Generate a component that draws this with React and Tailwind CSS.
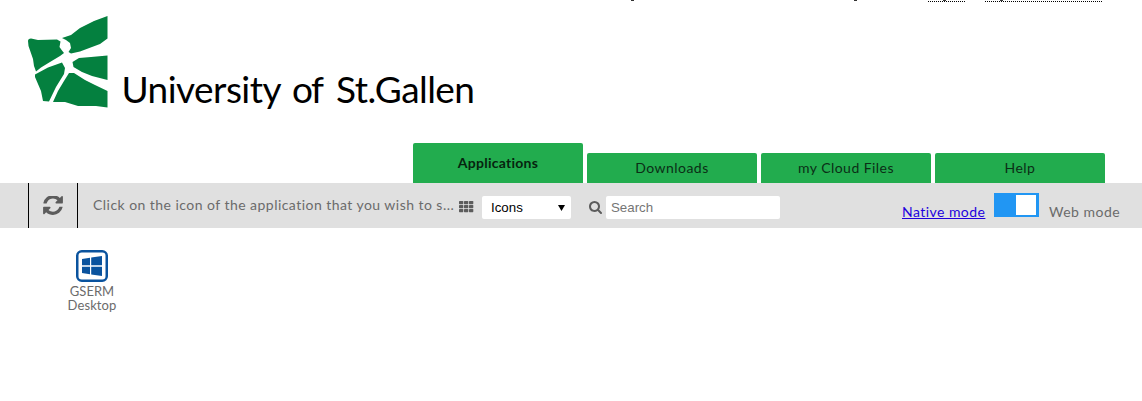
import React from "react";

const tabs = ["Downloads", "my Cloud Files", "Help"];

function Logo() {
  return (
    <svg className="block" width="480" height="120" viewBox="0 0 480 120" role="img">
      <g fill="#04803f">
        <path d="M28 41 Q28 38.500 31 38.500 L38 40 L57 39.500 L60.500 41.500 L59.500 47 L62 50.500 L64 53 L60 56 L50 62 L41 67.500 L36 71.500 L34 66 L33 59 L28.500 46 Z" />
        <path d="M62 38 L71 35 L80 28 L94 21 L107.500 16 L107.500 38.500 L100 44 L92 47 L80 51.500 L71 53.500 L68.500 52 L71 48 L70 43 L66 40 Z" />
        <path d="M72.500 62 L79 58 L91 57 L107.500 55.500 L107.500 80 L92 76 L82 72 L73.500 67 Z" />
        <path d="M35 74.500 L48 67.500 L62 62.500 L65 68 L64 74 L56 87 L49 101.500 L43 101 L41 91 L35 77 Z" />
        <path d="M69 73 L74 73 L85 80 L95 85 L107.500 91 L107.500 107.500 L96 106 L78 106 L65 102 L53 102 L58 91 L64 81 Z" />
      </g>
      <g fontSize="37" fontFamily="Lato, sans-serif" fill="#000">
        <text x="121.500" y="103" textLength="160">University</text>
        <text x="292" y="103" textLength="32">of</text>
        <text x="336" y="103" textLength="139">St.Gallen</text>
      </g>
    </svg>
  );
}

function RefreshIcon() {
  return (
    <svg width="20" height="19" viewBox="0 64 1536 1472" fill="#5c5c5c">
      <path d="M1511 928q0 5-1 7-64 268-268 434.500t-478 166.500q-146 0-282.500-55t-243.500-157l-129 129q-19 19-45 19t-45-19-19-45v-448q0-26 19-45t45-19h448q26 0 45 19t19 45-19 45l-137 137q71 66 161 102t187 36q134 0 250-65t186-179q11-17 53-117 8-23 30-23h192q13 0 22.500 9.500t9.500 22.500zm25-800v448q0 26-19 45t-45 19h-448q-26 0-45-19t-19-45 19-45l138-138q-148-137-349-137-134 0-250 65t-186 179q-11 17-53 117-8 23-30 23h-199q-13 0-22.500-9.500t-9.500-22.500v-7q65-268 270-434.500t480-166.500q146 0 284 55.500t245 156.500l130-129q19-19 45-19t45 19 19 45z" />
    </svg>
  );
}

function GridIcon() {
  return (
    <svg width="15" height="12" viewBox="0 0 15 12" fill="#5c5c5c">
      {[0, 4, 8].map((y) =>
        [0, 5, 10].map((x) => <rect key={`${x}-${y}`} x={x} y={y} width="4.300" height="3.200" rx="0.600" />)
      )}
    </svg>
  );
}

function SearchIcon() {
  return (
    <svg width="13" height="13" viewBox="0 128 1664 1664" fill="#5c5c5c">
      <path d="M1152 832q0-185-131.500-316.500t-316.500-131.500-316.500 131.500-131.500 316.500 131.500 316.500 316.500 131.500 316.500-131.500 131.500-316.500zm512 832q0 52-38 90t-90 38q-54 0-90-38l-343-342q-179 124-399 124-143 0-273.500-55.500t-225-150-150-225-55.500-273.500 55.500-273.500 150-225 225-150 273.500-55.500 273.500 55.500 225 150 150 225 55.500 273.500q0 220-124 399l343 343q37 37 37 90z" />
    </svg>
  );
}

function DesktopIcon() {
  return (
    <svg width="32" height="32" viewBox="0 0 32 32">
      <rect x="1.250" y="1.250" width="29.500" height="29.500" rx="4.500" fill="#fff" stroke="#0a539e" strokeWidth="2.500" />
      <path fill="#0a539e" d="M6 9 L14 7.800 V15.300 H6 Z M15.200 7.600 L26 6 V15.300 H15.200 Z M6 16.700 H14 V24.200 L6 23 Z M15.200 16.700 H26 V26 L15.200 24.400 Z" />
    </svg>
  );
}

function TopRemnants() {
  return (
    <svg className="absolute left-0 top-0" width="1142" height="3" viewBox="0 0 1142 3">
      <path d="M631 .5h3M854 .5h3M943 .5h3M1000 .5h3" stroke="#333" />
      <path d="M928 1.500h37M985 1.500h117" stroke="#000" strokeDasharray="1 1" />
    </svg>
  );
}

export default function App() {
  return (
    <div className="relative h-[401px] w-[1142px] overflow-hidden bg-white font-['Lato',sans-serif] text-[14px] text-[#6b6b6b]">
      <TopRemnants />
      <header className="h-[143px]">
        <Logo />
      </header>
      <nav className="flex h-10 items-end gap-1 pl-[413px] text-[#0b2e16]">
        <div className="flex h-10 w-[170px] items-center justify-center rounded-t-[2px] bg-[#22ac4e] pb-px font-bold tracking-[0.250px] text-[#06240f]">
          Applications
        </div>
        {tabs.map((label) => (
          <div key={label} className="flex h-[30px] w-[170px] items-center justify-center rounded-t-[2px] bg-[#22ac4e] pb-px tracking-[0.450px]">
            {label}
          </div>
        ))}
      </nav>
      <div className="flex h-[45px] items-start bg-[#e0e0e0]">
        <button className="ml-7 flex h-[45px] w-[50px] items-center justify-center border-x border-black">
          <RefreshIcon />
        </button>
        <p className="ml-[15px] mt-3 w-[362px] whitespace-nowrap leading-5 tracking-[0.460px]">
          Click on the icon of the application that you wish to s...
        </p>
        <div className="ml-1 mt-[18px]"><GridIcon /></div>
        <div className="ml-2 mt-[13px] flex h-[23px] w-[89px] items-center justify-between rounded-[2px] bg-white pl-[9px] pr-[6px] font-['Liberation_Sans',sans-serif] text-[13.300px] text-black">
          <span>Icons</span>
          <svg width="7" height="6" viewBox="0 0 7 6"><path d="M0 0h7L3.500 6z" /></svg>
        </div>
        <div className="ml-[18px] mt-[18px]"><SearchIcon /></div>
        <input
          className="ml-1 mt-[13px] h-[23px] w-[174px] rounded-[2px] bg-white px-[5px] font-['Liberation_Sans',sans-serif] text-[13.300px] placeholder:text-[#757575]"
          placeholder="Search"
        />
        <a className="ml-[122px] mt-[19px] w-[84px] whitespace-nowrap leading-5 tracking-[0.450px] text-[#2200dd] underline">Native mode</a>
        <div className="ml-2 mt-[10px] flex h-6 w-[45px] justify-end bg-[#2196f3] px-[3px] py-[2px]">
          <div className="h-5 w-5 bg-white" />
        </div>
        <span className="ml-[10px] mt-[19px] whitespace-nowrap leading-5 tracking-[0.500px]">Web mode</span>
      </div>
      <main className="pl-[52px] pt-[22px]">
        <div className="flex w-20 flex-col items-center text-center text-[13px] leading-[14px]">
          <DesktopIcon />
          <span className="mt-[2px]">GSERM</span>
          <span className="tracking-[0.100px]">Desktop</span>
        </div>
      </main>
    </div>
  );
}
